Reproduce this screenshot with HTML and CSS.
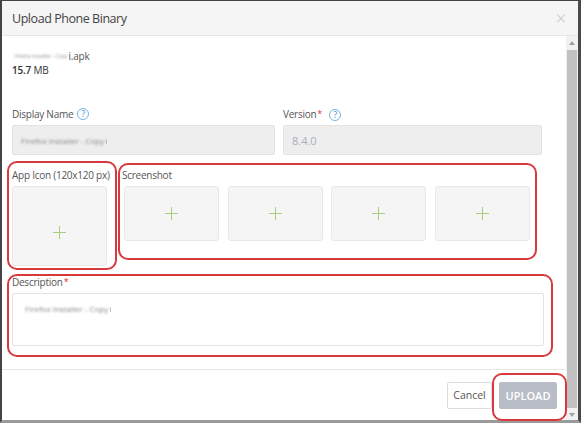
FILE: index.html
```html
<!DOCTYPE html>
<html>
<head>
<meta charset="utf-8">
<link rel="stylesheet" href="styles.css">
</head>
<body>
<div class="frame">
  <div class="header">
    <div class="title">Upload Phone Binary</div>
    <div class="close">×</div>
  </div>
  <div class="scroller">
    <div class="content">
      <div class="body">
        <div class="file">
          <div class="fname"><span class="blur tiny">Firefox Installer - Copy</span>i.apk</div>
          <div class="fsize"><b>15.7</b> MB</div>
        </div>
        <div class="row2">
          <div class="field">
            <div class="label">Display Name <span class="help">?</span></div>
            <div class="input"><span class="blur">Firefox Installer - Copy</span><span class="ghost">i</span></div>
          </div>
          <div class="field">
            <div class="label">Version<span class="req">*</span> <span class="help">?</span></div>
            <div class="input"><span class="val">8.4.0</span></div>
          </div>
        </div>
        <div class="media">
          <div class="appicon">
            <div class="label">App Icon (120x120 px)</div>
            <div class="box big"><span class="plus"></span></div>
          </div>
          <div class="shots">
            <div class="label">Screenshot</div>
            <div class="shotrow">
              <div class="box small"><span class="plus"></span></div>
              <div class="box small"><span class="plus"></span></div>
              <div class="box small"><span class="plus"></span></div>
              <div class="box small"><span class="plus"></span></div>
            </div>
          </div>
        </div>
        <div class="desc">
          <div class="label">Description<span class="req">*</span></div>
          <div class="textarea"><span class="blur">Firefox Installer - Copy</span><span class="ghost">i</span></div>
        </div>
      </div>
      <div class="footer">
        <button class="btn cancel">Cancel</button>
        <button class="btn upload">UPLOAD</button>
      </div>
    </div>
    <div class="scrollbar">
      <div class="arrow up"></div>
      <div class="thumb"></div>
      <div class="arrow down"></div>
    </div>
  </div>
  <div class="mark m-icon"></div>
  <div class="mark m-shots"></div>
  <div class="mark m-desc"></div>
  <div class="mark m-upload"></div>
</div>
</body>
</html>
```

FILE: styles.css
```css
* { box-sizing: border-box; }
html, body { margin: 0; padding: 0; }
body {
  width: 581px; height: 423px; overflow: hidden; background: #fff;
  font-family: "Open Sans", "Noto Sans", sans-serif; color: #555;
}
.frame {
  position: relative;
  width: 581px; height: 423px;
  border-left: 2px solid #444;
  border-right: 3px solid #4a4a4a;
  border-top: 1px solid #444;
  border-bottom: 3px solid #9a9a9a;
  display: flex; flex-direction: column;
}
.header {
  height: 35px; flex: none;
  background: #f5f5f5;
  border-bottom: 1px solid #e6e6e6;
  display: flex; align-items: center; justify-content: space-between;
  padding: 0 12px 0 10px;
}
.title { font-size: 12.5px; color: #444; letter-spacing: -0.45px; }
.close { font-size: 18px; color: #c4c4c4; line-height: 1; font-weight: 300; }
.scroller { flex: 1; display: flex; min-height: 0; }
.content { flex: 1; display: flex; flex-direction: column; }
.body { padding: 12px 22px 0 10px; flex: 1; }
.file { font-size: 10px; color: #555; line-height: 14px; letter-spacing: -0.2px; }
.fname { display: flex; align-items: center; margin-top: 1px; }
.fsize { color: #333; }
.fsize b { font-weight: 600; }
.blur { filter: blur(0.8px); color: #888; font-size: 8px; white-space: nowrap; }
.tiny { font-size: 5.5px; color: #999; margin-left: 3px; margin-right: 1px; }
.ghost { color: #a0a0c0; font-size: 8px; filter: blur(0.4px); margin-left: 1px; }
.label { font-size: 10px; color: #555; line-height: 14px; display: flex; align-items: center; white-space: nowrap; letter-spacing: -0.25px; }
.req { color: #d33; font-size: 9px; align-self: flex-start; margin-left: 1px; }
.help {
  display: inline-flex; align-items: center; justify-content: center;
  width: 12px; height: 12px; border: 1px solid #7ab3e0; border-radius: 50%;
  color: #4a90d0; font-size: 9px; margin-left: 4px; letter-spacing: 0;
}
.row2 { display: grid; grid-template-columns: 263px 259px; column-gap: 8px; margin-top: 30px; }
.field .label { margin-bottom: 4px; }
.field:nth-child(2) .help { margin-left: 7px; margin-top: 2px; }
.input {
  height: 30px; background: #eee; border: 1px solid #e2e2e2; border-radius: 2px;
  display: flex; align-items: center; padding: 0 8px;
}
.val { font-size: 11px; color: #a8aebb; }
.media { display: flex; margin-top: 13px; }
.appicon { width: 110px; }
.media .label { margin-bottom: 4px; }
.box {
  background: #f5f5f5; border: 1px solid #e8e8e8; border-radius: 3px;
  display: flex; align-items: center; justify-content: center;
}
.big { width: 95px; height: 80px; margin-left: 0; }
.small { width: 95px; height: 55px; }
.shotrow { display: flex; gap: 8.5px; margin-left: 2px; }
.plus { position: relative; width: 13px; height: 13px; }
.plus::before, .plus::after { content: ""; position: absolute; background: #a6cf7d; }
.plus::before { left: 6px; top: 0; width: 1px; height: 13px; }
.plus::after { top: 6px; left: 0; width: 13px; height: 1px; }
.big .plus { margin-top: 12px; }
.desc { margin-top: 9px; }
.desc .label { margin-bottom: 4px; }
.textarea {
  height: 53px; border: 1px solid #e2e2e2; border-radius: 2px; background: #fff;
  padding: 9px 12px;
  display: flex; align-items: flex-start;
}
.footer {
  height: 51px; flex: none; border-top: 1px solid #e6e6e6;
  display: flex; align-items: center; justify-content: flex-end; gap: 7px;
  padding: 0 9px 0 0;
}
.btn {
  height: 27px; font-family: inherit; font-size: 10.5px; border-radius: 2px; padding: 0;
}
.cancel { width: 45px; background: #fff; border: 1px solid #ddd; color: #555; }
.upload { width: 58px; background: #b8bdc7; border: 1px solid #b8bdc7; color: #fff; font-weight: 600; font-size: 11px; }
.scrollbar {
  width: 12px; flex: none; background: #f1f1f1; display: flex; flex-direction: column; align-items: center;
}
.thumb { flex: 1; width: 10px; background: #c1c1c1; margin: 2px 0; }
.arrow { width: 0; height: 0; border-left: 3px solid transparent; border-right: 3px solid transparent; margin: 5px 0 3px; }
.up { border-bottom: 4px solid #a0a0a0; }
.down { border-top: 4px solid #a0a0a0; margin: 3px 0 3px; }
.mark { position: absolute; border: 2px solid #d8393c; border-radius: 10px; pointer-events: none; }
.m-icon { left: 5px; top: 160px; width: 110px; height: 109px; }
.m-shots { left: 116px; top: 162px; width: 419px; height: 97px; }
.m-desc { left: 5px; top: 273px; width: 546px; height: 83px; }
.m-upload { left: 490px; top: 372px; width: 75px; height: 48px; }
```
